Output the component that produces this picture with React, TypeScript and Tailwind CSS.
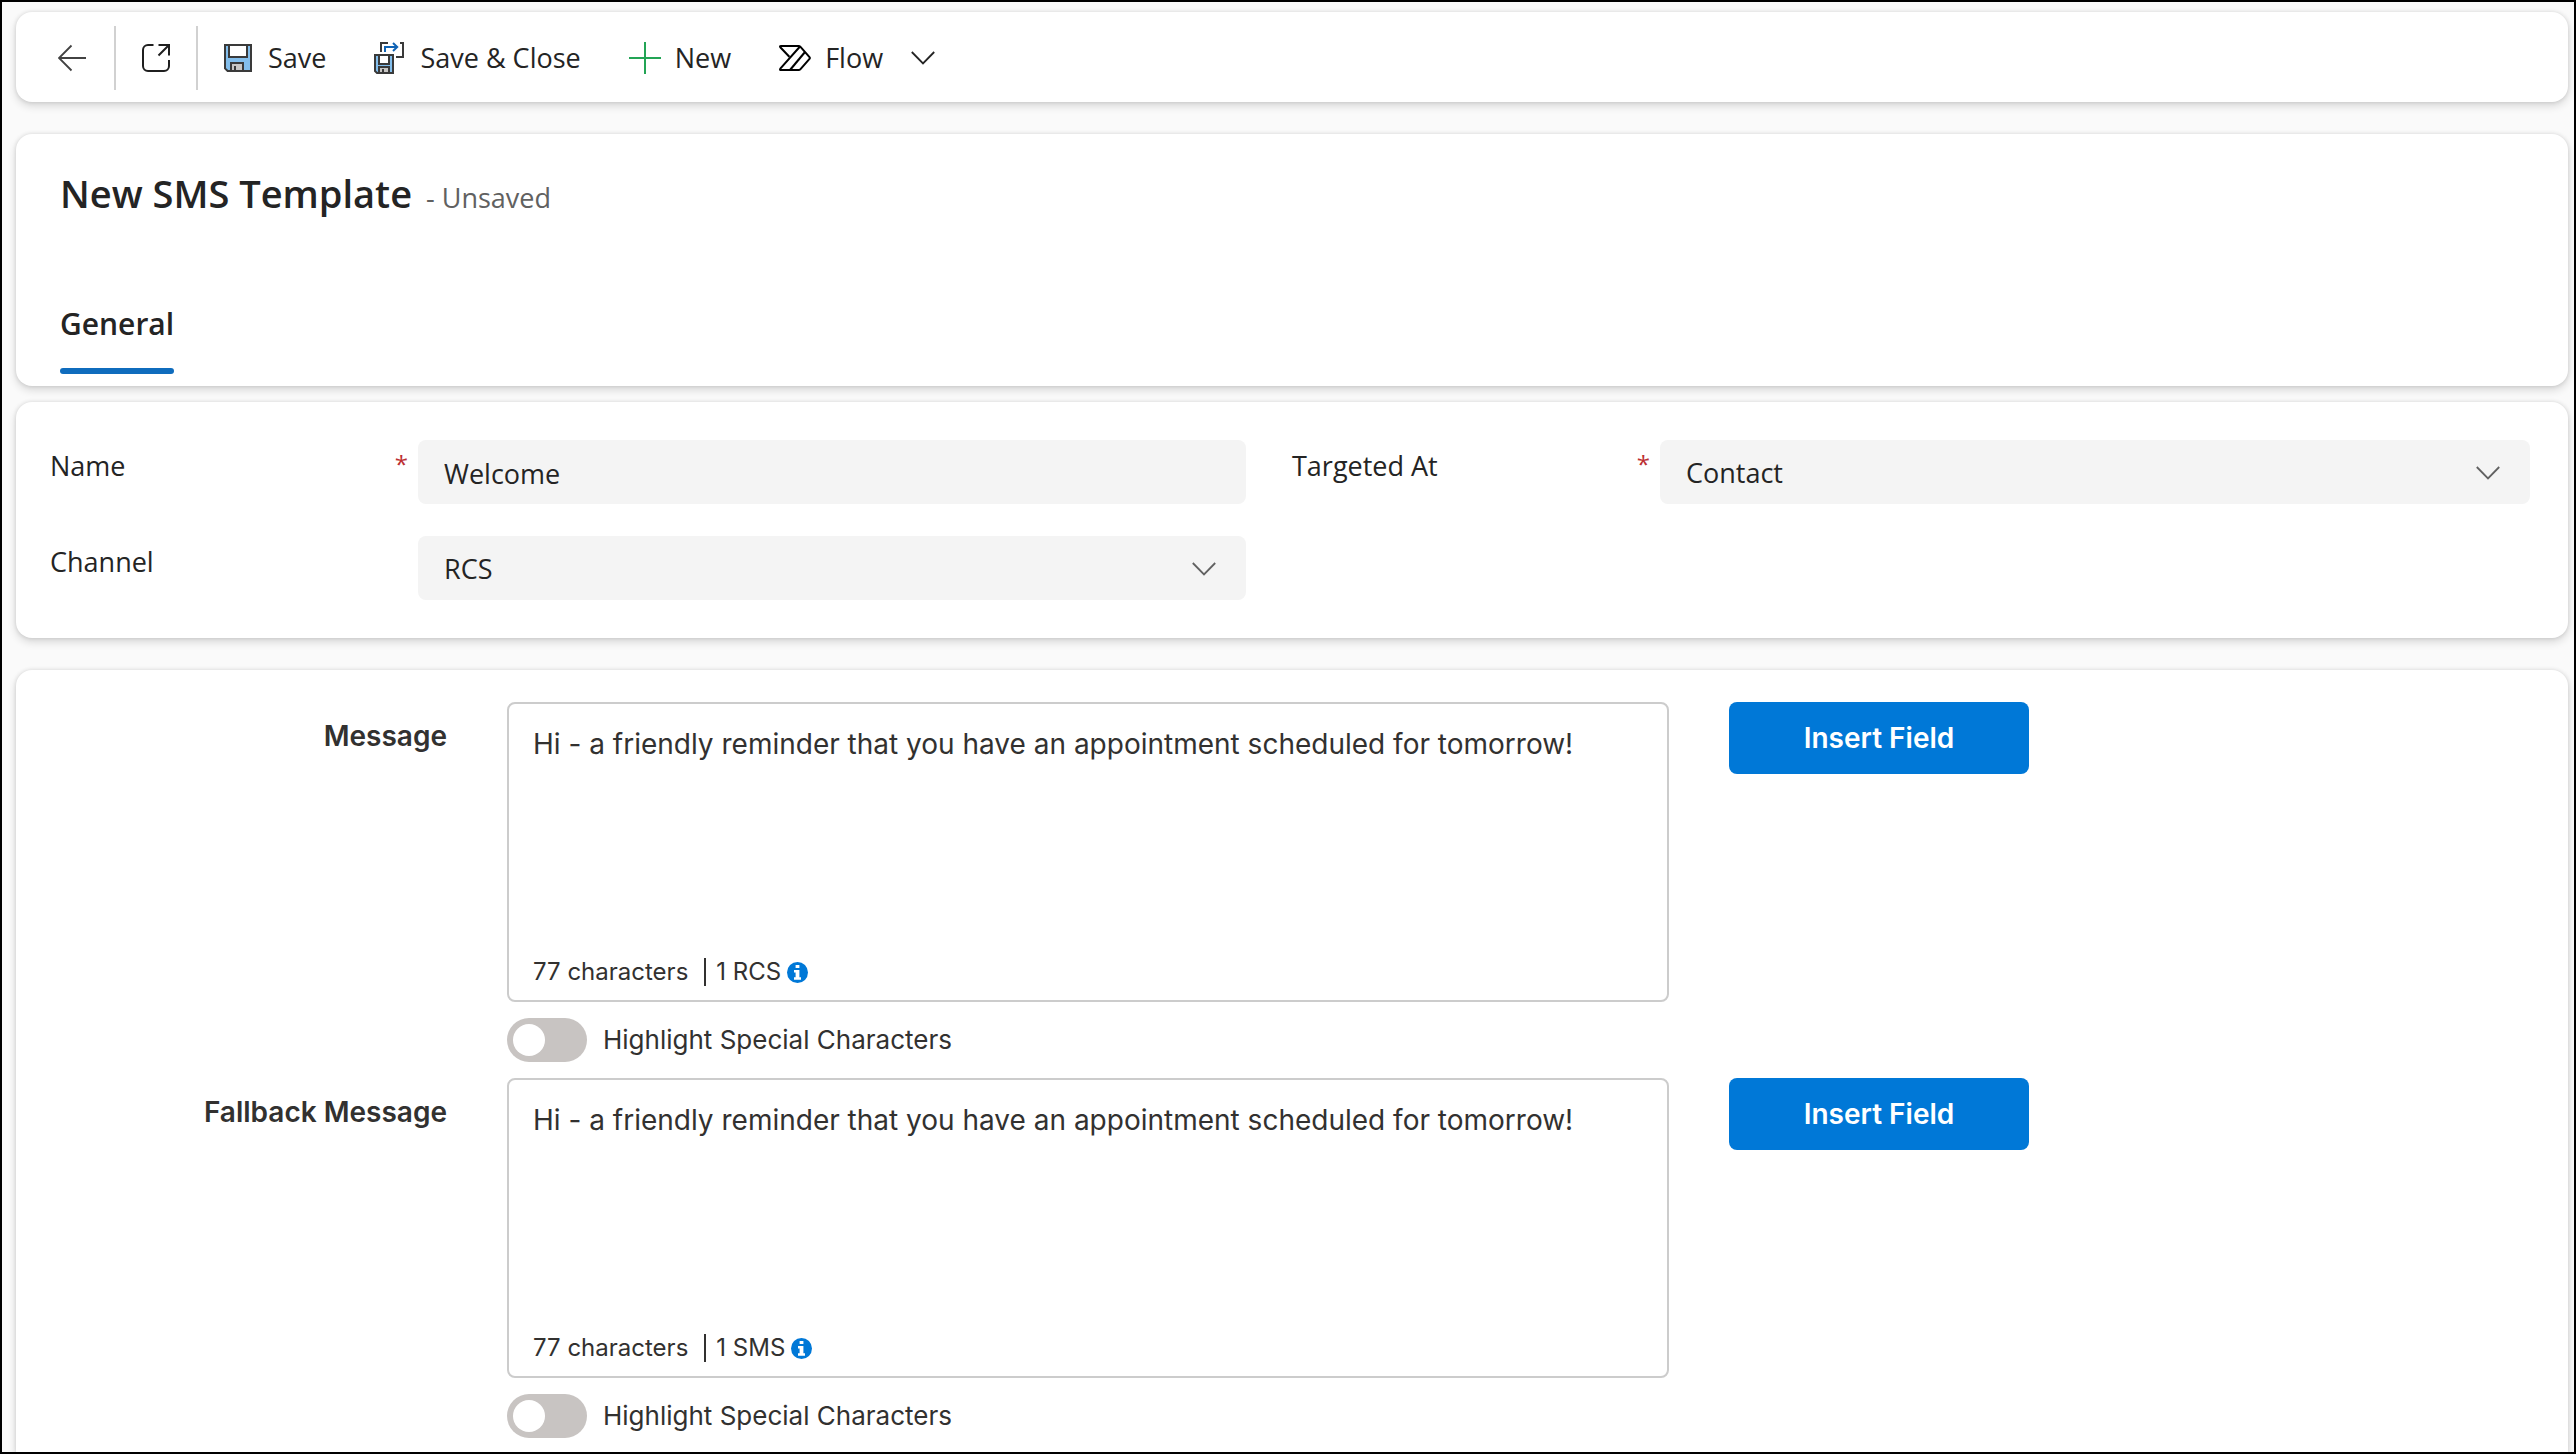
import React, { useId, useState } from 'react';

const UI_FONT = "font-['Open_Sans','Noto_Sans',sans-serif]";
const EDITOR_FONT = "font-['Inter','Liberation_Sans',sans-serif]";

const CARD_SHADOW =
  'shadow-[0_0_4px_rgba(0,0,0,0.12),0_4px_8px_rgba(0,0,0,0.14)]';

const BackIcon = () => (
  <svg viewBox="0 0 28 28" className="size-7" fill="none" stroke="#424242">
    <path d="M28 14H1.5M13.5 1.5L1 14l12.5 12.5" strokeWidth="1.8" />
  </svg>
);

const PopOutIcon = () => (
  <svg
    viewBox="0 0 28 28"
    className="size-7"
    fill="none"
    stroke="#1f1f1f"
    strokeWidth="2"
  >
    <path d="M11.5 1H6a5 5 0 0 0-5 5v16a5 5 0 0 0 5 5h16a5 5 0 0 0 5-5v-6" />
    <path d="M16.5 1H27v10.5M27 1L16.5 11.5" />
  </svg>
);

const SaveIcon = () => (
  <svg viewBox="0 0 14 14" className="size-7">
    <path d="M.5.5h13v13H1.8L.5 12.2z" fill="#83beec" stroke="#3a3a3a" />
    <path d="M2.5.5h9v6h-9z" fill="#fff" stroke="#3a3a3a" />
    <path d="M3.5 13.5v-4h6v4z" fill="#c8c6c4" stroke="#3a3a3a" />
    <path d="M5 11h1v2H5z" fill="#3a3a3a" />
  </svg>
);

const SaveCloseIcon = () => (
  <svg viewBox="0 0 30 32" className="h-8 w-[30px]" fill="none">
    <path d="M7 10V1h7M26 1h3v14h-7" stroke="#3a3a3a" strokeWidth="2" />
    <path d="M11 10V5h12M19 1l4.2 4L19 9" stroke="#0f63b5" strokeWidth="2" />
    <path
      d="M1 13h18v18H3l-2-2z"
      fill="#83beec"
      stroke="#3a3a3a"
      strokeWidth="2"
    />
    <path d="M5 13h10v9H5z" fill="#fff" stroke="#3a3a3a" strokeWidth="2" />
    <path d="M5 31v-6h10v6z" fill="#c8c6c4" stroke="#3a3a3a" strokeWidth="2" />
    <path d="M8 27h2v3H8z" fill="#3a3a3a" />
  </svg>
);

const PlusIcon = () => (
  <svg viewBox="0 0 32 32" className="size-8" stroke="#23a455" strokeWidth="2">
    <path d="M16 0v32M0 16h32" />
  </svg>
);

const FlowIcon = () => (
  <svg
    viewBox="0 0 32 26"
    className="h-[26px] w-8"
    fill="none"
    stroke="#000"
    strokeWidth="2"
    strokeLinejoin="round"
  >
    <path d="M10.3 11.8L1.3 2.3Q.5 1 2 1h17.5q1.2 0 2 .9l9 10.3q.7.8 0 1.6l-9 10.3q-.8.9-2 .9H2q-1.5 0-.7-1.3L21 1.5" />
    <path d="M26 7L11 25" />
  </svg>
);

const InfoIcon = () => (
  <svg viewBox="0 0 21 21" className="size-[21px]">
    <circle cx="10.5" cy="10.5" r="10.5" fill="#0078d7" />
    <path
      d="M8.6 3h3.8v3H8.6zM7 8h5.4v7.2H14v2.6H7v-2.6h1.6v-4.6H7z"
      fill="#fff"
    />
  </svg>
);

const Chevron: React.FC<{ className?: string }> = ({ className = '' }) => (
  <svg
    viewBox="0 0 24 14"
    className={`h-3.5 w-6 ${className}`}
    fill="none"
    stroke="currentColor"
    strokeWidth="1.8"
  >
    <path d="M.8 1L12 12.4 23.2 1" />
  </svg>
);

const Divider = () => <div className="h-16 w-0.5 bg-[#d1d1d1]" />;

const CommandBar = () => (
  <nav
    className={`flex items-center rounded-2xl bg-white pt-3.5 pb-3 text-[27px] leading-9 text-[#242424] ${CARD_SHADOW}`}
  >
    <button aria-label="Back" className="mr-7 ml-[42px]">
      <BackIcon />
    </button>
    <Divider />
    <button aria-label="Open in new window" className="mx-[26px]">
      <PopOutIcon />
    </button>
    <Divider />
    <button className="ml-[26px] flex items-center gap-4">
      <SaveIcon />
      Save
    </button>
    <button className="ml-12 flex items-center gap-4">
      <SaveCloseIcon />
      Save &amp; Close
    </button>
    <button className="ml-12 flex items-center gap-3.5">
      <PlusIcon />
      New
    </button>
    <button className="ml-12 flex items-center gap-3.5">
      <FlowIcon />
      Flow
      <Chevron className="ml-3.5" />
    </button>
  </nav>
);

const FormHeader = () => (
  <header
    className={`mt-8 rounded-2xl bg-white px-11 pt-[33px] pb-3 ${CARD_SHADOW}`}
  >
    <div className="flex items-baseline gap-3.5">
      <h1 className="text-[38px] leading-[52px] font-semibold text-[#242424]">
        New SMS Template
      </h1>
      <span className="text-[27px] leading-9 text-[#616161]">- Unsaved</span>
    </div>
    <div role="tablist" className="mt-[85px] flex">
      <button
        role="tab"
        aria-selected="true"
        className="text-[30px] leading-10 font-semibold text-[#242424]"
      >
        General
        <span className="mt-6 block h-1.5 rounded-full bg-[#0f6cbd]" />
      </button>
    </div>
  </header>
);

interface FieldProps {
  id: string;
  label: string;
  required?: boolean;
  children: React.ReactNode;
}

const Field: React.FC<FieldProps> = ({ id, label, required, children }) => (
  <div className="flex">
    <label
      htmlFor={id}
      className="flex w-[368px] shrink-0 justify-between pt-2 pr-2.5 text-[27px] leading-9"
    >
      {label}
      {required && <span className="text-2xl text-[#bc2f32]">*</span>}
    </label>
    <div className="relative flex-1">{children}</div>
  </div>
);

const CONTROL =
  'h-16 w-full appearance-none rounded-lg bg-[#f4f4f4] px-[26px] pt-0.5 text-[27px] outline-none';

const SelectBox: React.FC<{ id: string; options: string[] }> = ({
  id,
  options,
}) => (
  <>
    <select id={id} className={CONTROL}>
      {options.map((option) => (
        <option key={option}>{option}</option>
      ))}
    </select>
    <Chevron className="pointer-events-none absolute top-[26px] right-[30px] text-[#616161]" />
  </>
);

const DetailsSection = () => (
  <section
    className={`mt-4 grid grid-cols-2 rounded-2xl bg-white py-[38px] text-[#242424] ${CARD_SHADOW}`}
  >
    <div className="flex flex-col gap-8 pr-[46px] pl-[34px]">
      <Field id="name" label="Name" required>
        <input id="name" defaultValue="Welcome" className={CONTROL} />
      </Field>
      <Field id="channel" label="Channel">
        <SelectBox id="channel" options={['RCS', 'SMS']} />
      </Field>
    </div>
    <div className="pr-[38px]">
      <Field id="target" label="Targeted At" required>
        <SelectBox id="target" options={['Contact', 'Lead', 'Account']} />
      </Field>
    </div>
  </section>
);

interface MessageEditorProps {
  label: string;
  segment: string;
}

const MessageEditor: React.FC<MessageEditorProps> = ({ label, segment }) => {
  const id = useId();
  const [text, setText] = useState(
    'Hi - a friendly reminder that you have an appointment scheduled for tomorrow!',
  );

  return (
    <div className="grid grid-cols-[431fr_1162fr_839fr] items-start gap-x-[60px]">
      <label
        htmlFor={id}
        className="pt-3.5 text-right text-[28px] leading-10 font-semibold"
      >
        {label}
      </label>
      <div>
        <div className="rounded-lg border-2 border-[#ccc] px-6 pt-5 pb-3">
          <textarea
            id={id}
            value={text}
            onChange={(e) => setText(e.target.value)}
            className="block h-58 w-full resize-none text-[28px] leading-10 outline-none"
          />
          <div className="flex items-center text-2xl leading-8">
            <span>{text.length} characters</span>
            <span className="mr-2.5 ml-4 h-7 w-0.5 bg-[#323130]" />
            <span className="mr-1.5">{segment}</span>
            <InfoIcon />
          </div>
        </div>
        <label className="mt-4 flex items-center gap-4 text-[26px] leading-9">
          <input
            type="checkbox"
            role="switch"
            className="h-11 w-20 appearance-none rounded-full bg-[#c8c4c2] p-1.5 before:block before:size-8 before:rounded-full before:bg-white checked:bg-[#0078d7] checked:before:ml-9"
          />
          Highlight Special Characters
        </label>
      </div>
      <button className="h-[72px] w-[300px] rounded-lg bg-[#0078d7] text-[28px] font-semibold text-white">
        Insert Field
      </button>
    </div>
  );
};

export default function App() {
  return (
    <main
      className={`flex min-h-screen flex-col border-2 border-black bg-[#fafafa] pt-2.5 pr-1.5 pl-3.5 ${UI_FONT}`}
    >
      <CommandBar />
      <FormHeader />
      <DetailsSection />
      <section
        className={`mt-8 flex flex-1 flex-col gap-4 rounded-t-2xl bg-white pt-8 pb-3.5 text-[#323130] ${EDITOR_FONT} ${CARD_SHADOW}`}
      >
        <MessageEditor label="Message" segment="1 RCS" />
        <MessageEditor label="Fallback Message" segment="1 SMS" />
      </section>
    </main>
  );
}
